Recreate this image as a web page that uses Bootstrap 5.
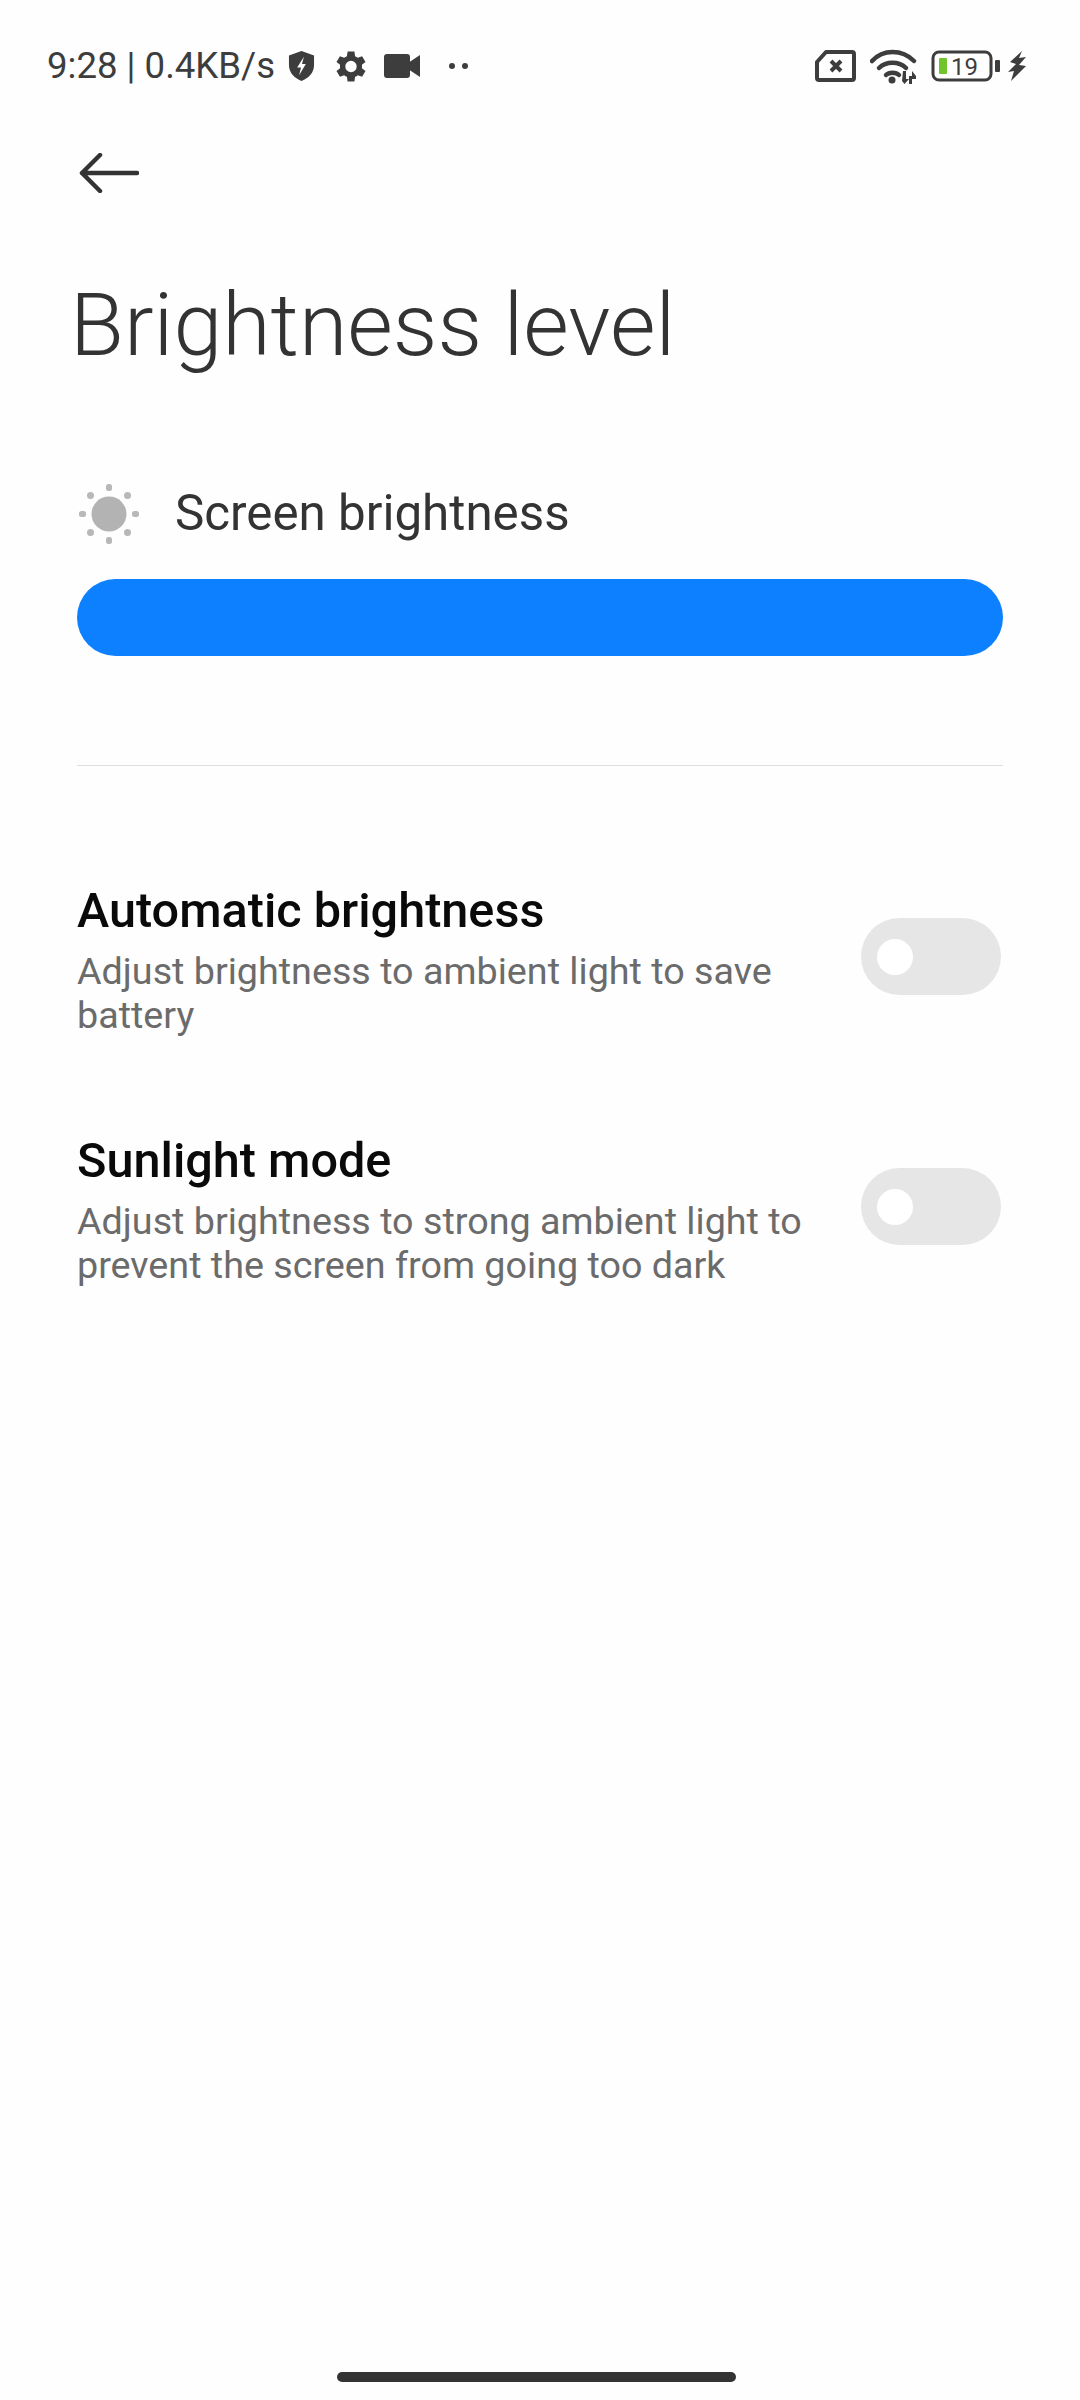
<!DOCTYPE html>
<html lang="en">
<head>
  <meta charset="UTF-8">
  <title>Brightness level</title>
  <link href="https://cdn.jsdelivr.net/npm/bootstrap@5.3.3/dist/css/bootstrap.min.css" rel="stylesheet">
  <style>
    body { font-family: Roboto, "Liberation Sans", sans-serif; background: #fefefe; color: #333; margin: 0; }
    .screen { height: 2400px; overflow: hidden; }
    .status-bar { height: 66px; margin-top: 33px; flex: none; padding: 0 53px 0 47px; font-size: 36.6px; line-height: 66px; color: #3d3d3d; }
    .status-bar svg { display: block; flex: none; }
    .ic-shield { margin-left: 13px; }
    .ic-gear { margin-left: 21px; }
    .ic-cam { margin-left: 18px; }
    .ic-dots { margin-left: 27px; }
    .ic-wifi, .ic-batt { margin-left: 14px; }
    .ic-bolt { margin-left: 7px; }
    .back-row { padding: 54px 0 0 79px; height: 103px; flex: none; }
    .page-title { font-size: 88px; font-weight: 300; line-height: 104px; color: #333; margin: 71px 0 0 70px; }
    .section-pad { padding: 0 77px; }
    .bright-head { margin-top: 104px; height: 66px; font-size: 49.3px; color: #333; }
    .bright-head svg { margin-left: 2px; flex: none; }
    .bright-head span { margin-left: 36px; }
    .bright-bar { height: 77px; background: #0d80ff; border-radius: 39px; margin-top: 32px; }
    .soft-line { height: 1px; background: #dedede; margin-top: 109px; }
    .opt-row { height: 250px; }
    .opt-first { margin-top: 117px; }
    .opt-title { font-size: 48.6px; font-weight: 500; line-height: 56px; color: #0a0a0a; }
    .opt-sub { font-size: 37.7px; line-height: 44px; color: #6b6b6b; margin-top: 10px; }
    .opt-text { width: 780px; }
    .soft-toggle { width: 140px; height: 77px; border-radius: 39px; background: #e6e6e6; flex: none; margin-right: 2px; padding-left: 16px; margin-top: 35px; }
    .soft-toggle i { display: block; width: 36px; height: 36px; border-radius: 50%; background: #fff; }
    .home-bar { width: 399px; height: 10px; border-radius: 5px; background: #333; margin: auto 0 18px 337px; flex: none; }
  </style>
</head>
<body>
  <div class="screen d-flex flex-column">
    <div class="status-bar d-flex justify-content-between align-items-center">
      <div class="d-flex align-items-center">
        <span>9:28 | 0.4KB/s</span>
        <svg class="ic-shield" width="27" height="32" viewBox="0 0 28 33"><path fill="#3d3d3d" d="M14 1l13 4.500v10c0 8-5.500 13.500-13 16.500C6.500 29 1 23.500 1 15.500v-10z"/><path fill="#fff" d="M16.500 7l-7 11h4l-2 8 7-11.500h-4z"/></svg>
        <svg class="ic-gear" width="30" height="31" viewBox="3.500 2.500 18.400 19"><path fill="#3d3d3d" fill-rule="evenodd" d="M19.400 13a7.500 7.500 0 0 0 0-2l2.200-1.700-2.100-3.600-2.600 1a7.600 7.600 0 0 0-1.700-1L14.800 2.800h-4.200l-.4 2.900a7.600 7.600 0 0 0-1.700 1l-2.600-1-2.100 3.600L6 11a7.500 7.500 0 0 0 0 2l-2.200 1.700 2.100 3.600 2.600-1a7.600 7.600 0 0 0 1.700 1l.4 2.900h4.200l.4-2.900a7.600 7.600 0 0 0 1.700-1l2.600 1 2.100-3.600zM12.700 15.500a3.500 3.500 0 1 1 0-7 3.500 3.500 0 0 1 0 7z"/></svg>
        <svg class="ic-cam" width="37" height="24" viewBox="0 0 37 24"><rect x="0" y="0" width="26" height="24" rx="3" fill="#3d3d3d"/><path fill="#3d3d3d" d="M24 9l12-8v22l-12-8z"/></svg>
        <svg class="ic-dots" width="21" height="8" viewBox="0 0 21 8"><circle cx="4" cy="4" r="3" fill="#3d3d3d"/><circle cx="17" cy="4" r="3" fill="#3d3d3d"/></svg>
      </div>
      <div class="d-flex align-items-center">
        <svg width="41" height="32" viewBox="0 0 41 32"><path fill="none" stroke="#3d3d3d" stroke-width="4" stroke-linejoin="round" d="M2 12L11 2h26a2 2 0 0 1 2 2v24a2 2 0 0 1-2 2H4a2 2 0 0 1-2-2z"/><path fill="none" stroke="#3d3d3d" stroke-width="4" d="M16 11l10 10M26 11L16 21"/></svg>
        <svg class="ic-wifi" width="47" height="35" viewBox="0 0 47 35"><g fill="none" stroke="#3d3d3d" stroke-width="4.500" stroke-linecap="round"><path d="M2 12c11-12 30-12 42 0"/><path d="M9 19c7-7 20-7 27 0"/><path d="M16 26c3-3 10-3 13 0"/></g><circle cx="22" cy="31" r="3.500" fill="#3d3d3d"/><path fill="#3d3d3d" d="M33 22h3v8h3l-4.500 5L32 32zM39 27h3v-5l4 5v3h-4v5h-3z"/></svg>
        <svg class="ic-batt" width="70" height="32" viewBox="0 0 70 32"><rect x="2" y="2" width="58" height="28" rx="6" fill="#fff" stroke="#3d3d3d" stroke-width="3"/><rect x="8" y="8" width="8" height="16" rx="1" fill="#6fc52b"/><text x="20" y="25" font-family="Roboto, sans-serif" font-size="24" fill="#3d3d3d">19</text><rect x="64" y="10" width="5" height="12" rx="1" fill="#3d3d3d"/></svg>
        <svg class="ic-bolt" width="19" height="30" viewBox="0 0 19 30"><path fill="#3d3d3d" d="M14 0L2 11l6 2-8 8 6-1-3 10 15-15-7-1 7-8-7 1z"/></svg>
      </div>
    </div>

    <div class="back-row">
      <svg class="d-block" width="60" height="40" viewBox="0 0 60 40"><path fill="none" stroke="#333" stroke-width="4.500" stroke-linecap="round" stroke-linejoin="round" d="M58 20H3M21 2L3 20l18 18"/></svg>
    </div>

    <h1 class="page-title">Brightness level</h1>

    <div class="section-pad">
      <div class="bright-head d-flex align-items-center">
        <svg width="60" height="60" viewBox="2 2 60 60"><circle cx="32" cy="32" r="17.500" fill="#b3b3b3"/><g fill="#b8b8b8"><rect x="29" y="2" width="6" height="7" rx="2.500"/><rect x="29" y="55" width="6" height="7" rx="2.500"/><rect x="2" y="29" width="7" height="6" rx="2.500"/><rect x="55" y="29" width="7" height="6" rx="2.500"/><circle cx="13.500" cy="13.500" r="3.500"/><circle cx="50.500" cy="13.500" r="3.500"/><circle cx="13.500" cy="50.500" r="3.500"/><circle cx="50.500" cy="50.500" r="3.500"/></g></svg>
        <span>Screen brightness</span>
      </div>
      <div class="bright-bar"></div>
      <div class="soft-line"></div>

      <div class="opt-row opt-first d-flex justify-content-between align-items-start">
        <div class="opt-text">
          <div class="opt-title">Automatic brightness</div>
          <div class="opt-sub">Adjust brightness to ambient light to save<br>battery</div>
        </div>
        <div class="soft-toggle d-flex align-items-center"><i></i></div>
      </div>
      <div class="opt-row d-flex justify-content-between align-items-start">
        <div class="opt-text">
          <div class="opt-title">Sunlight mode</div>
          <div class="opt-sub">Adjust brightness to strong ambient light to<br>prevent the screen from going too dark</div>
        </div>
        <div class="soft-toggle d-flex align-items-center"><i></i></div>
      </div>
    </div>

    <div class="home-bar"></div>
  </div>
</body>
</html>
